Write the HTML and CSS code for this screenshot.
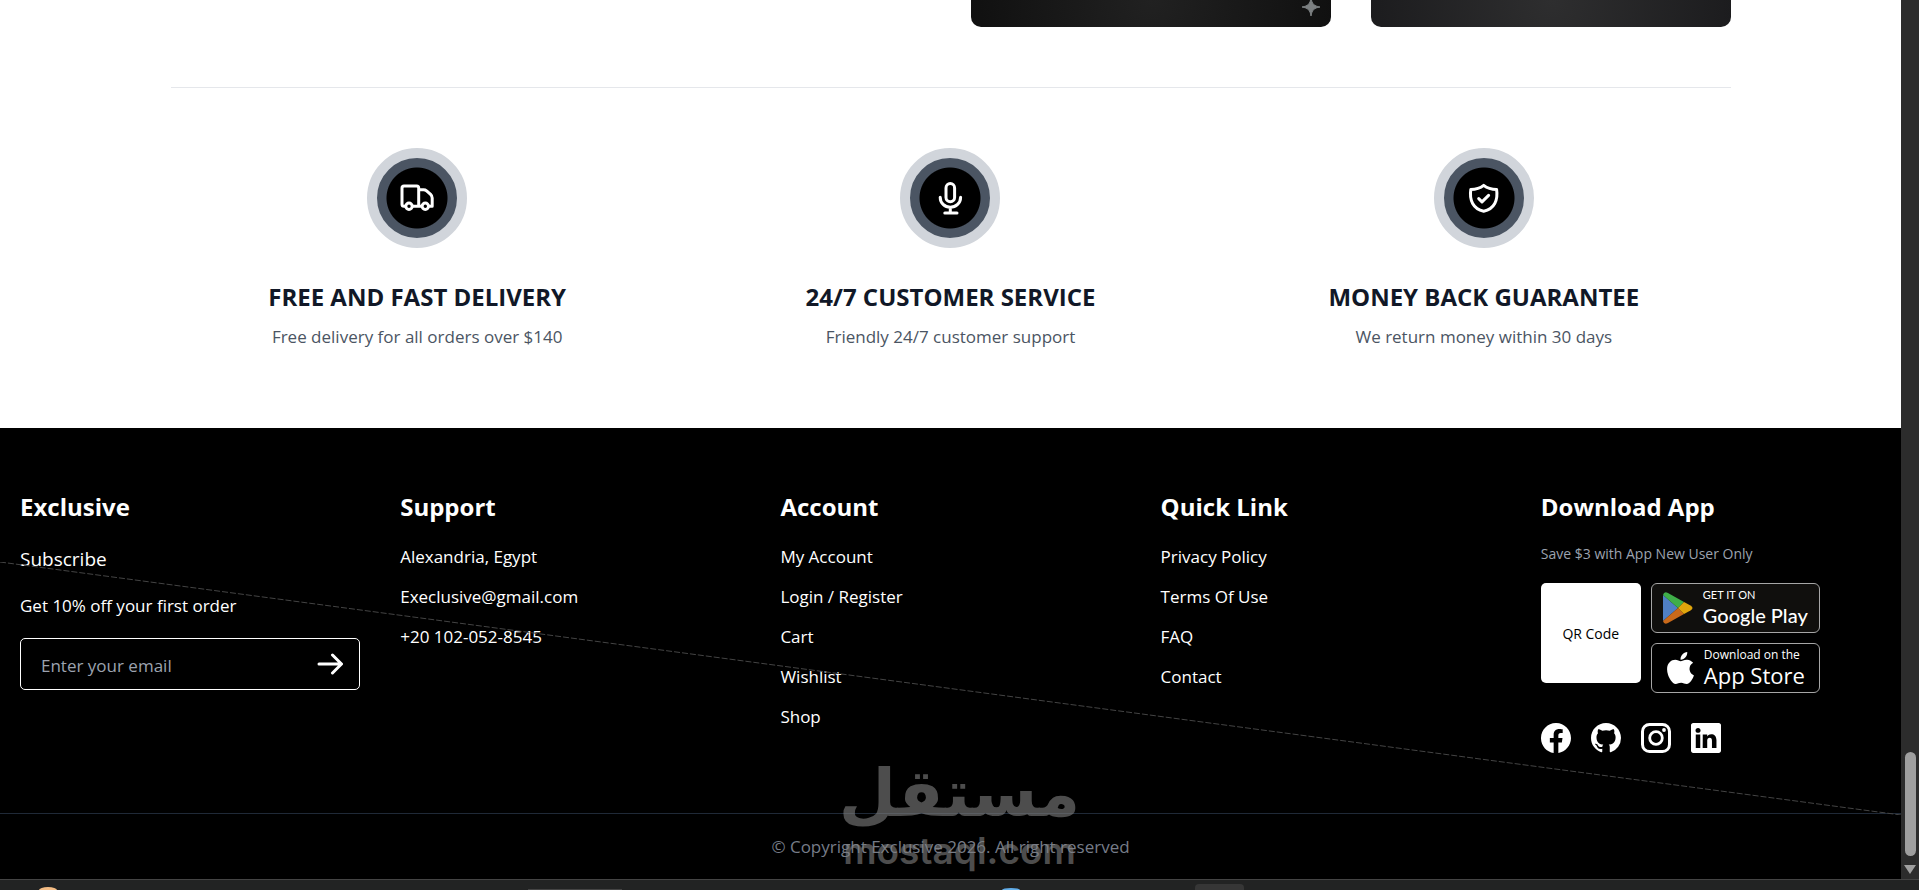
FILE: index.html
```
<!DOCTYPE html>
<html lang="en">
<head>
  <meta charset="UTF-8">
  <title>Exclusive</title>
  <link rel="stylesheet" href="styles.css">
</head>
<body>
  <div class="window">
    <div class="page">
      <main class="container">
        <div class="products">
          <div class="product">
            <svg class="sparkle" viewBox="0 0 18 18"><path d="M9 0C10 6 12 8 18 9C12 10 10 12 9 18C8 12 6 10 0 9C6 8 8 6 9 0Z" fill="#7c8082" stroke="#7c8082"/></svg>
          </div>
          <div class="product product-light"></div>
        </div>

        <section class="features">
          <div class="feature">
            <div class="badge">
              <svg viewBox="0 0 40 40">
                <path d="M8 28.3H7A2 2 0 0 1 5 26.3V10A2 2 0 0 1 7 8H19.7A2 2 0 0 1 21.7 10V28.3M16 28.3H24.3M21.7 11.7H26.5Q28.3 11.7 29.6 12.8L33.6 16.4Q35.2 18 35.2 20V28.3H32.5"/>
                <circle cx="12" cy="28.3" r="3.2"/>
                <circle cx="28.3" cy="28.3" r="3.2"/>
              </svg>
            </div>
            <h3>FREE AND FAST DELIVERY</h3>
            <p>Free delivery for all orders over $140</p>
          </div>
          <div class="feature">
            <div class="badge">
              <svg viewBox="0 0 40 40">
                <rect x="16" y="5.6" width="8.6" height="18.2" rx="4.3"/>
                <path d="M10.2 19.2C10.2 25 14.6 29.3 20.3 29.3S30.6 25 30.6 19.2M20.3 29.3V35M14.8 35H27"/>
              </svg>
            </div>
            <h3>24/7 CUSTOMER SERVICE</h3>
            <p>Friendly 24/7 customer support</p>
          </div>
          <div class="feature">
            <div class="badge">
              <svg viewBox="0 0 40 40">
                <path d="M19.7 7.4C16 10.3 11.5 11.5 6.8 11.6C5.2 22 9 31 19.7 33.2C30.4 31 34.2 22 32.6 11.6C27.9 11.5 23.4 10.3 19.7 7.4Z"/>
                <path d="M14.7 20.6L18 23.9L24.6 17.4"/>
              </svg>
            </div>
            <h3>MONEY BACK GUARANTEE</h3>
            <p>We return money within 30 days</p>
          </div>
        </section>
      </main>

      <footer class="footer">
        <div class="columns">
          <div class="col">
            <h2>Exclusive</h2>
            <p class="subscribe">Subscribe</p>
            <label class="offer" for="email">Get 10% off your first order</label>
            <form class="email">
              <input id="email" type="email" placeholder="Enter your email">
              <button type="button" aria-label="Send">
                <svg viewBox="0 0 26 22"><path d="M2 11H24M15.5 2L24.5 11L15.5 20"/></svg>
              </button>
            </form>
          </div>
          <div class="col">
            <h2>Support</h2>
            <ul>
              <li>Alexandria, Egypt</li>
              <li>Execlusive@gmail.com</li>
              <li>+20 102-052-8545</li>
            </ul>
          </div>
          <div class="col">
            <h2>Account</h2>
            <ul>
              <li><a href="#">My Account</a></li>
              <li><a href="#">Login / Register</a></li>
              <li><a href="#">Cart</a></li>
              <li><a href="#">Wishlist</a></li>
              <li><a href="#">Shop</a></li>
            </ul>
          </div>
          <div class="col">
            <h2>Quick Link</h2>
            <ul>
              <li><a href="#">Privacy Policy</a></li>
              <li><a href="#">Terms Of Use</a></li>
              <li><a href="#">FAQ</a></li>
              <li><a href="#">Contact</a></li>
            </ul>
          </div>
          <div class="col">
            <h2>Download App</h2>
            <p class="note">Save $3 with App New User Only</p>
            <div class="apps">
              <div class="qr">QR Code</div>
              <div class="stores">
                <a class="store google" href="#">
                  <svg viewBox="0 0 30 32">
                    <path d="M0 3V29L15 16Z" fill="#4f7fc4"/>
                    <path d="M0 3Q1 -1 5 1L21 10L15 16Z" fill="#3fae49"/>
                    <path d="M0 29Q1 33 5 31L21 22L15 16Z" fill="#c9691a"/>
                    <path d="M21 10L27.500 13.500Q31.500 16 27.500 18.500L21 22L15 16Z" fill="#e0a50c"/>
                  </svg>
                  <span class="store-text"><small>GET IT ON</small><b>Google Play</b></span>
                </a>
                <a class="store apple" href="#">
                  <svg viewBox="4 32 376 448"><path fill="#fff" d="M318.700 268.700c-.2-36.700 16.400-64.400 50-84.800-18.800-26.900-47.200-41.700-84.700-44.600-35.500-2.800-74.300 20.700-88.500 20.700-15 0-49.400-19.700-76.400-19.700C63.300 141.200 4 184.800 4 273.500q0 39.300 14.400 81.200c12.800 36.700 59 126.700 107.200 125.200 25.200-.6 43-17.900 75.800-17.900 31.800 0 48.300 17.900 76.400 17.900 48.600-.7 90.400-82.500 102.600-119.300-65.200-30.700-61.700-90-61.700-91.900zm-56.600-164.200c27.300-32.400 24.800-61.900 24-72.500-24.100 1.400-52 16.400-67.900 34.900-17.500 19.800-27.800 44.300-25.600 71.900 26.100 2 49.900-11.400 69.500-34.300z"/></svg>
                  <span class="store-text"><small>Download on the</small><b>App Store</b></span>
                </a>
              </div>
            </div>
            <div class="social">
              <a href="#" aria-label="Facebook"><svg viewBox="0 0 16 16"><path fill="#fff" d="M16 8.049c0-4.446-3.582-8.050-8-8.050C3.580 0-.002 3.603-.002 8.050c0 4.017 2.926 7.347 6.750 7.951v-5.625h-2.030V8.050H6.750V6.275c0-2.017 1.195-3.131 3.022-3.131.876 0 1.791.157 1.791.157v1.980h-1.009c-.993 0-1.303.621-1.303 1.258v1.510h2.218l-.354 2.326H9.250V16c3.824-.604 6.750-3.934 6.750-7.951"/></svg></a>
              <a href="#" aria-label="GitHub"><svg viewBox="0 0 16 16"><path fill="#fff" d="M8 0C3.580 0 0 3.580 0 8c0 3.540 2.290 6.530 5.470 7.590.4.070.55-.17.55-.38 0-.19-.01-.82-.01-1.490-2.010.37-2.530-.49-2.690-.94-.09-.23-.48-.94-.82-1.130-.28-.15-.68-.52-.01-.53.63-.01 1.080.58 1.230.82.72 1.210 1.870.87 2.330.66.070-.52.28-.87.51-1.070-1.780-.2-3.640-.89-3.640-3.950 0-.87.31-1.590.82-2.150-.08-.2-.36-1.020.08-2.120 0 0 .67-.21 2.200.82.64-.18 1.320-.27 2-.27s1.360.09 2 .27c1.530-1.040 2.200-.82 2.200-.82.44 1.100.16 1.920.08 2.120.51.56.82 1.270.82 2.150 0 3.070-1.870 3.750-3.650 3.950.29.25.54.73.54 1.480 0 1.070-.01 1.930-.01 2.200 0 .21.15.46.55.38A8.010 8.010 0 0 0 16 8c0-4.420-3.580-8-8-8"/></svg></a>
              <a href="#" aria-label="Instagram"><svg viewBox="0 0 30 30"><rect x="1.500" y="1.500" width="27" height="27" rx="7" fill="none" stroke="#fff" stroke-width="3"/><circle cx="15" cy="15" r="6.300" fill="none" stroke="#fff" stroke-width="2.800"/><circle cx="23" cy="7" r="1.900" fill="#fff"/></svg></a>
              <a href="#" aria-label="LinkedIn"><svg viewBox="0 0 16 16"><path fill="#fff" d="M0 1.146C0 .513.526 0 1.175 0h13.650C15.474 0 16 .513 16 1.146v13.708c0 .633-.526 1.146-1.175 1.146H1.175C.526 16 0 15.487 0 14.854zm4.943 12.248V6.169H2.542v7.225zm-1.200-8.212c.837 0 1.358-.554 1.358-1.248-.015-.709-.52-1.248-1.342-1.248S2.400 3.226 2.400 3.934c0 .694.521 1.248 1.327 1.248zm4.908 8.212V9.359c0-.216.016-.432.080-.586.173-.431.568-.878 1.232-.878.869 0 1.216.662 1.216 1.634v3.865h2.401V9.250c0-2.220-1.184-3.252-2.764-3.252-1.274 0-1.845.7-2.165 1.193v.025h-.016l.016-.025V6.169h-2.400c.030.678 0 7.225 0 7.225z"/></svg></a>
            </div>
          </div>
        </div>
        <div class="copyright">© Copyright Exclusive 2026. All right reserved</div>

        <svg class="diagonal"><line x1="0" y1="0" x2="100%" y2="100%"/></svg>
        <div class="watermark">
          <span class="watermark-ar" lang="ar">مستقل</span>
          <span class="watermark-en">mostaql.com</span>
        </div>
      </footer>
    </div>

    <div class="scrollbar">
      <div class="thumb"></div>
      <div class="arrow"></div>
    </div>
  </div>

  <div class="taskbar">
    <div class="task orange"></div>
    <div class="task strip"></div>
    <div class="task blue"></div>
    <div class="task tab"></div>
  </div>
</body>
</html>
```
FILE: styles.css
```
* {
  box-sizing: border-box;
}
body {
  margin: 0;
  min-height: 100vh;
  display: flex;
  flex-direction: column;
  overflow: hidden;
  background: white;
  font-family: "Open Sans", "Noto Sans", sans-serif;
  font-size: 17px;
}
h2, h3, p, ul {
  margin: 0;
  padding: 0;
}
ul {
  list-style: none;
}
a {
  color: inherit;
  text-decoration: none;
}
svg {
  display: block;
}
.window {
  flex: 1;
  display: flex;
}
.page {
  flex: 1;
  display: flex;
  flex-direction: column;
}

/* products and features */
.container {
  width: 100%;
  max-width: 1560px;
  margin: 0 auto;
}
.products {
  display: grid;
  grid-template-columns: 360px 360px;
  gap: 40px;
  justify-content: end;
  padding-bottom: 60px;
  border-bottom: 1px solid #e5e7eb;
}
.product {
  height: 27px;
  padding-right: 11px;
  display: flex;
  justify-content: flex-end;
  border-radius: 0 0 10px 10px;
  background: radial-gradient(circle at 50% 0, #212121, #101010);
}
.product-light {
  background: radial-gradient(circle at 50% 0, #2e2e2f, #1c1c1e);
}
.sparkle {
  width: 18px;
  height: 18px;
  margin-top: -2px;
}
.features {
  display: grid;
  grid-template-columns: repeat(3, 1fr);
  gap: 40px;
  padding: 60px 0 72px;
  text-align: center;
}
.badge {
  width: 100px;
  height: 100px;
  margin: 0 auto 29px;
  display: flex;
  align-items: center;
  justify-content: center;
  border: 10px solid #d1d5db;
  border-radius: 50%;
  background: radial-gradient(circle, #000 30px, #4b5563 31px);
}
.badge svg {
  width: 40px;
  height: 40px;
  fill: none;
  stroke: white;
  stroke-width: 3;
  stroke-linecap: round;
  stroke-linejoin: round;
}
.feature h3 {
  font-size: 24px;
  line-height: 40px;
  font-weight: 700;
  color: #111827;
}
.feature p {
  line-height: 39px;
  color: #4b5563;
}

/* footer */
.footer {
  flex: 1;
  position: relative;
  background: black;
  color: white;
}
.columns {
  display: grid;
  grid-template-columns: repeat(5, 1fr);
  gap: 40px;
  padding: 59px 20px 60px;
}
.col h2 {
  font-size: 24px;
  line-height: 40px;
  font-weight: 700;
}
.col ul {
  padding-top: 10px;
}
.col li {
  line-height: 40px;
}
.subscribe {
  padding-top: 10px;
  font-size: 19px;
  line-height: 44px;
}
.offer {
  display: block;
  line-height: 50px;
}
.email {
  display: flex;
  height: 52px;
  margin-top: 7px;
  padding: 0 16px 0 20px;
  border: 1px solid white;
  border-radius: 5px;
}
.email input {
  flex: 1;
  min-width: 0;
  padding: 2px 0 0;
  border: none;
  outline: none;
  background: none;
  color: white;
  font: inherit;
}
.email input::placeholder {
  color: #9ca3af;
}
.email button {
  padding: 0;
  border: none;
  background: none;
}
.email svg {
  width: 26px;
  height: 22px;
  fill: none;
  stroke: white;
  stroke-width: 3;
  stroke-linecap: round;
  stroke-linejoin: round;
}
.note {
  padding-top: 11px;
  font-size: 14px;
  line-height: 32px;
  color: #9ca3af;
}
.apps {
  display: flex;
  gap: 10px;
  padding-top: 13px;
}
.qr {
  width: 100px;
  height: 100px;
  border-radius: 5px;
  background: white;
  color: black;
  font-size: 14px;
  line-height: 102px;
  text-align: center;
}
.stores {
  display: flex;
  flex-direction: column;
  gap: 10px;
}
.store {
  width: 169px;
  height: 50px;
  display: flex;
  align-items: center;
  gap: 10px;
  border: 1px solid #a6a6a6;
  border-radius: 6px;
}
.store svg {
  height: 32px;
}
.store-text {
  display: flex;
  flex-direction: column;
  padding-bottom: 2px;
}
.store small {
  font-size: 12px;
  line-height: 16px;
}
.store b {
  font-size: 22px;
  line-height: 24px;
  font-weight: 500;
}
.google {
  padding-left: 11px;
  background: #100f0d;
}
.google svg {
  width: 30px;
}
.google small, .google b {
  font-family: Lato, sans-serif;
}
.google small {
  font-size: 11px;
}
.google b {
  font-size: 20px;
}
.apple {
  padding-left: 15px;
}
.apple svg {
  width: 27px;
}
.social {
  display: flex;
  gap: 20px;
  padding-top: 30px;
}
.social svg {
  width: 30px;
  height: 30px;
}
.copyright {
  border-top: 1px solid #1f2937;
  line-height: 65px;
  text-align: center;
  color: #767c88;
}
.diagonal {
  position: absolute;
  top: 134px;
  left: 0;
  width: 100%;
  height: 253px;
  pointer-events: none;
}
.diagonal line {
  stroke: #444;
  stroke-width: 1;
  stroke-dasharray: 6 2;
}
.watermark {
  position: absolute;
  bottom: 0;
  left: 0;
  right: 0;
  padding: 0 0 4px 18px;
  display: flex;
  flex-direction: column;
  align-items: center;
  color: #808080;
  opacity: 0.6;
  pointer-events: none;
}
.watermark-ar {
  font-family: "DejaVu Sans", sans-serif;
  font-size: 66px;
  line-height: 66px;
  font-weight: 700;
}
.watermark-en {
  font-family: Inter, sans-serif;
  font-size: 37px;
  line-height: 48px;
  font-weight: 600;
}

/* browser scrollbar and system taskbar */
.scrollbar {
  width: 18px;
  display: flex;
  flex-direction: column;
  align-items: center;
  justify-content: flex-end;
  gap: 9px;
  padding-bottom: 5px;
  background: #2c2c2c;
}
.thumb {
  width: 11px;
  height: 104px;
  border-radius: 6px;
  background: #9f9f9f;
}
.arrow {
  border: 6px solid transparent;
  border-top: 9px solid #9f9f9f;
  border-bottom: none;
}
.taskbar {
  height: 11px;
  flex-shrink: 0;
  display: grid;
  grid-template-columns: 39px 489px 474px 193px 1fr;
  align-items: end;
  overflow: hidden;
  border-top: 1px solid #444;
  background: #222323;
}
.task {
  height: 3px;
}
.orange {
  grid-column: 2;
  width: 18px;
  border-radius: 50% 50% 0 0 / 100% 100% 0 0;
  background: #f5bd85;
}
.strip {
  grid-column: 3;
  width: 94px;
  height: 1px;
  background: #444;
}
.blue {
  grid-column: 4;
  width: 18px;
  height: 2px;
  border-radius: 50% 50% 0 0 / 100% 100% 0 0;
  background: #62aeea;
}
.tab {
  grid-column: 5;
  width: 49px;
  height: 6px;
  border-radius: 4px 4px 0 0;
  background: #363636;
}
```
